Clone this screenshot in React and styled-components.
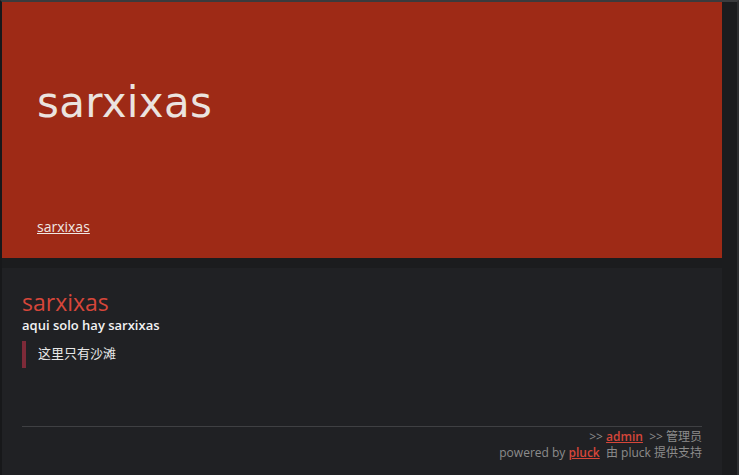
import React from "react";
import styled, { createGlobalStyle } from "styled-components";

const Global = createGlobalStyle`
  html, body { margin: 0; padding: 0; background: #1b1c1e; }
  body { font-family: "Open Sans", "Noto Sans CJK SC", sans-serif; }
`;

const Frame = styled.div`
  height: 475px;
  box-sizing: border-box;
  border-top: 2px solid #3a3b3d;
  border-left: 2px solid #17181a;
  border-right: 2px solid #2e2f31;
  padding-right: 15px;
  display: flex;
  flex-direction: column;
  gap: 10px;
  overflow: hidden;
`;

const Header = styled.header`
  background: #9e2a16;
  height: 256px;
  box-sizing: border-box;
  padding: 70px 35px 0;
  display: flex;
  flex-direction: column;
`;

const SiteTitle = styled.h1`
  margin: 0;
  font-family: "DejaVu Sans", sans-serif;
  font-weight: normal;
  font-size: 42px;
  line-height: 62px;
  color: #ebe3df;
  letter-spacing: 0.3px;
`;

const Nav = styled.nav`
  margin-top: auto;
  padding-bottom: 21px;
`;

const NavLink = styled.a`
  font-size: 14px;
  color: #f0e8e4;
  text-decoration: underline;
`;

const Main = styled.main`
  flex: 1;
  background: #202124;
  padding: 20px 20px 0;
  display: flex;
  flex-direction: column;
`;

const PageTitle = styled.h2`
  margin: 0;
  font-weight: normal;
  font-size: 23px;
  line-height: 29px;
  color: #d6463a;
`;

const Sub = styled.p`
  margin: 0;
  font-weight: 600;
  font-size: 13px;
  line-height: 16px;
  color: #f2f2f2;
`;

const Quote = styled.blockquote`
  margin: 8px 0 0;
  padding: 3px 0 6px 12px;
  border-left: 4px solid #7d2a38;
  font-size: 13px;
  line-height: 18px;
  color: #e8e8e8;
`;

const Footer = styled.footer`
  margin-top: auto;
  border-top: 1px solid #3f4043;
  padding: 2px 0 14px;
  text-align: right;
  font-size: 12px;
  line-height: 16px;
  color: #8c8c8c;
`;

const FootLink = styled.a`
  color: #d6463a;
  font-weight: 600;
  text-decoration: underline;
`;

export default function App() {
  return (
    <>
      <Global />
      <Frame>
        <Header>
          <SiteTitle>sarxixas</SiteTitle>
          <Nav>
            <NavLink href="#">sarxixas</NavLink>
          </Nav>
        </Header>
        <Main>
          <PageTitle>sarxixas</PageTitle>
          <Sub>aqui solo hay sarxixas</Sub>
          <Quote>这里只有沙滩</Quote>
          <Footer>
            <div>
              &gt;&gt; <FootLink href="#">admin</FootLink> &nbsp;&gt;&gt; 管理员
            </div>
            <div>
              powered by <FootLink href="#">pluck</FootLink> &nbsp;由 pluck 提供支持
            </div>
          </Footer>
        </Main>
      </Frame>
    </>
  );
}
